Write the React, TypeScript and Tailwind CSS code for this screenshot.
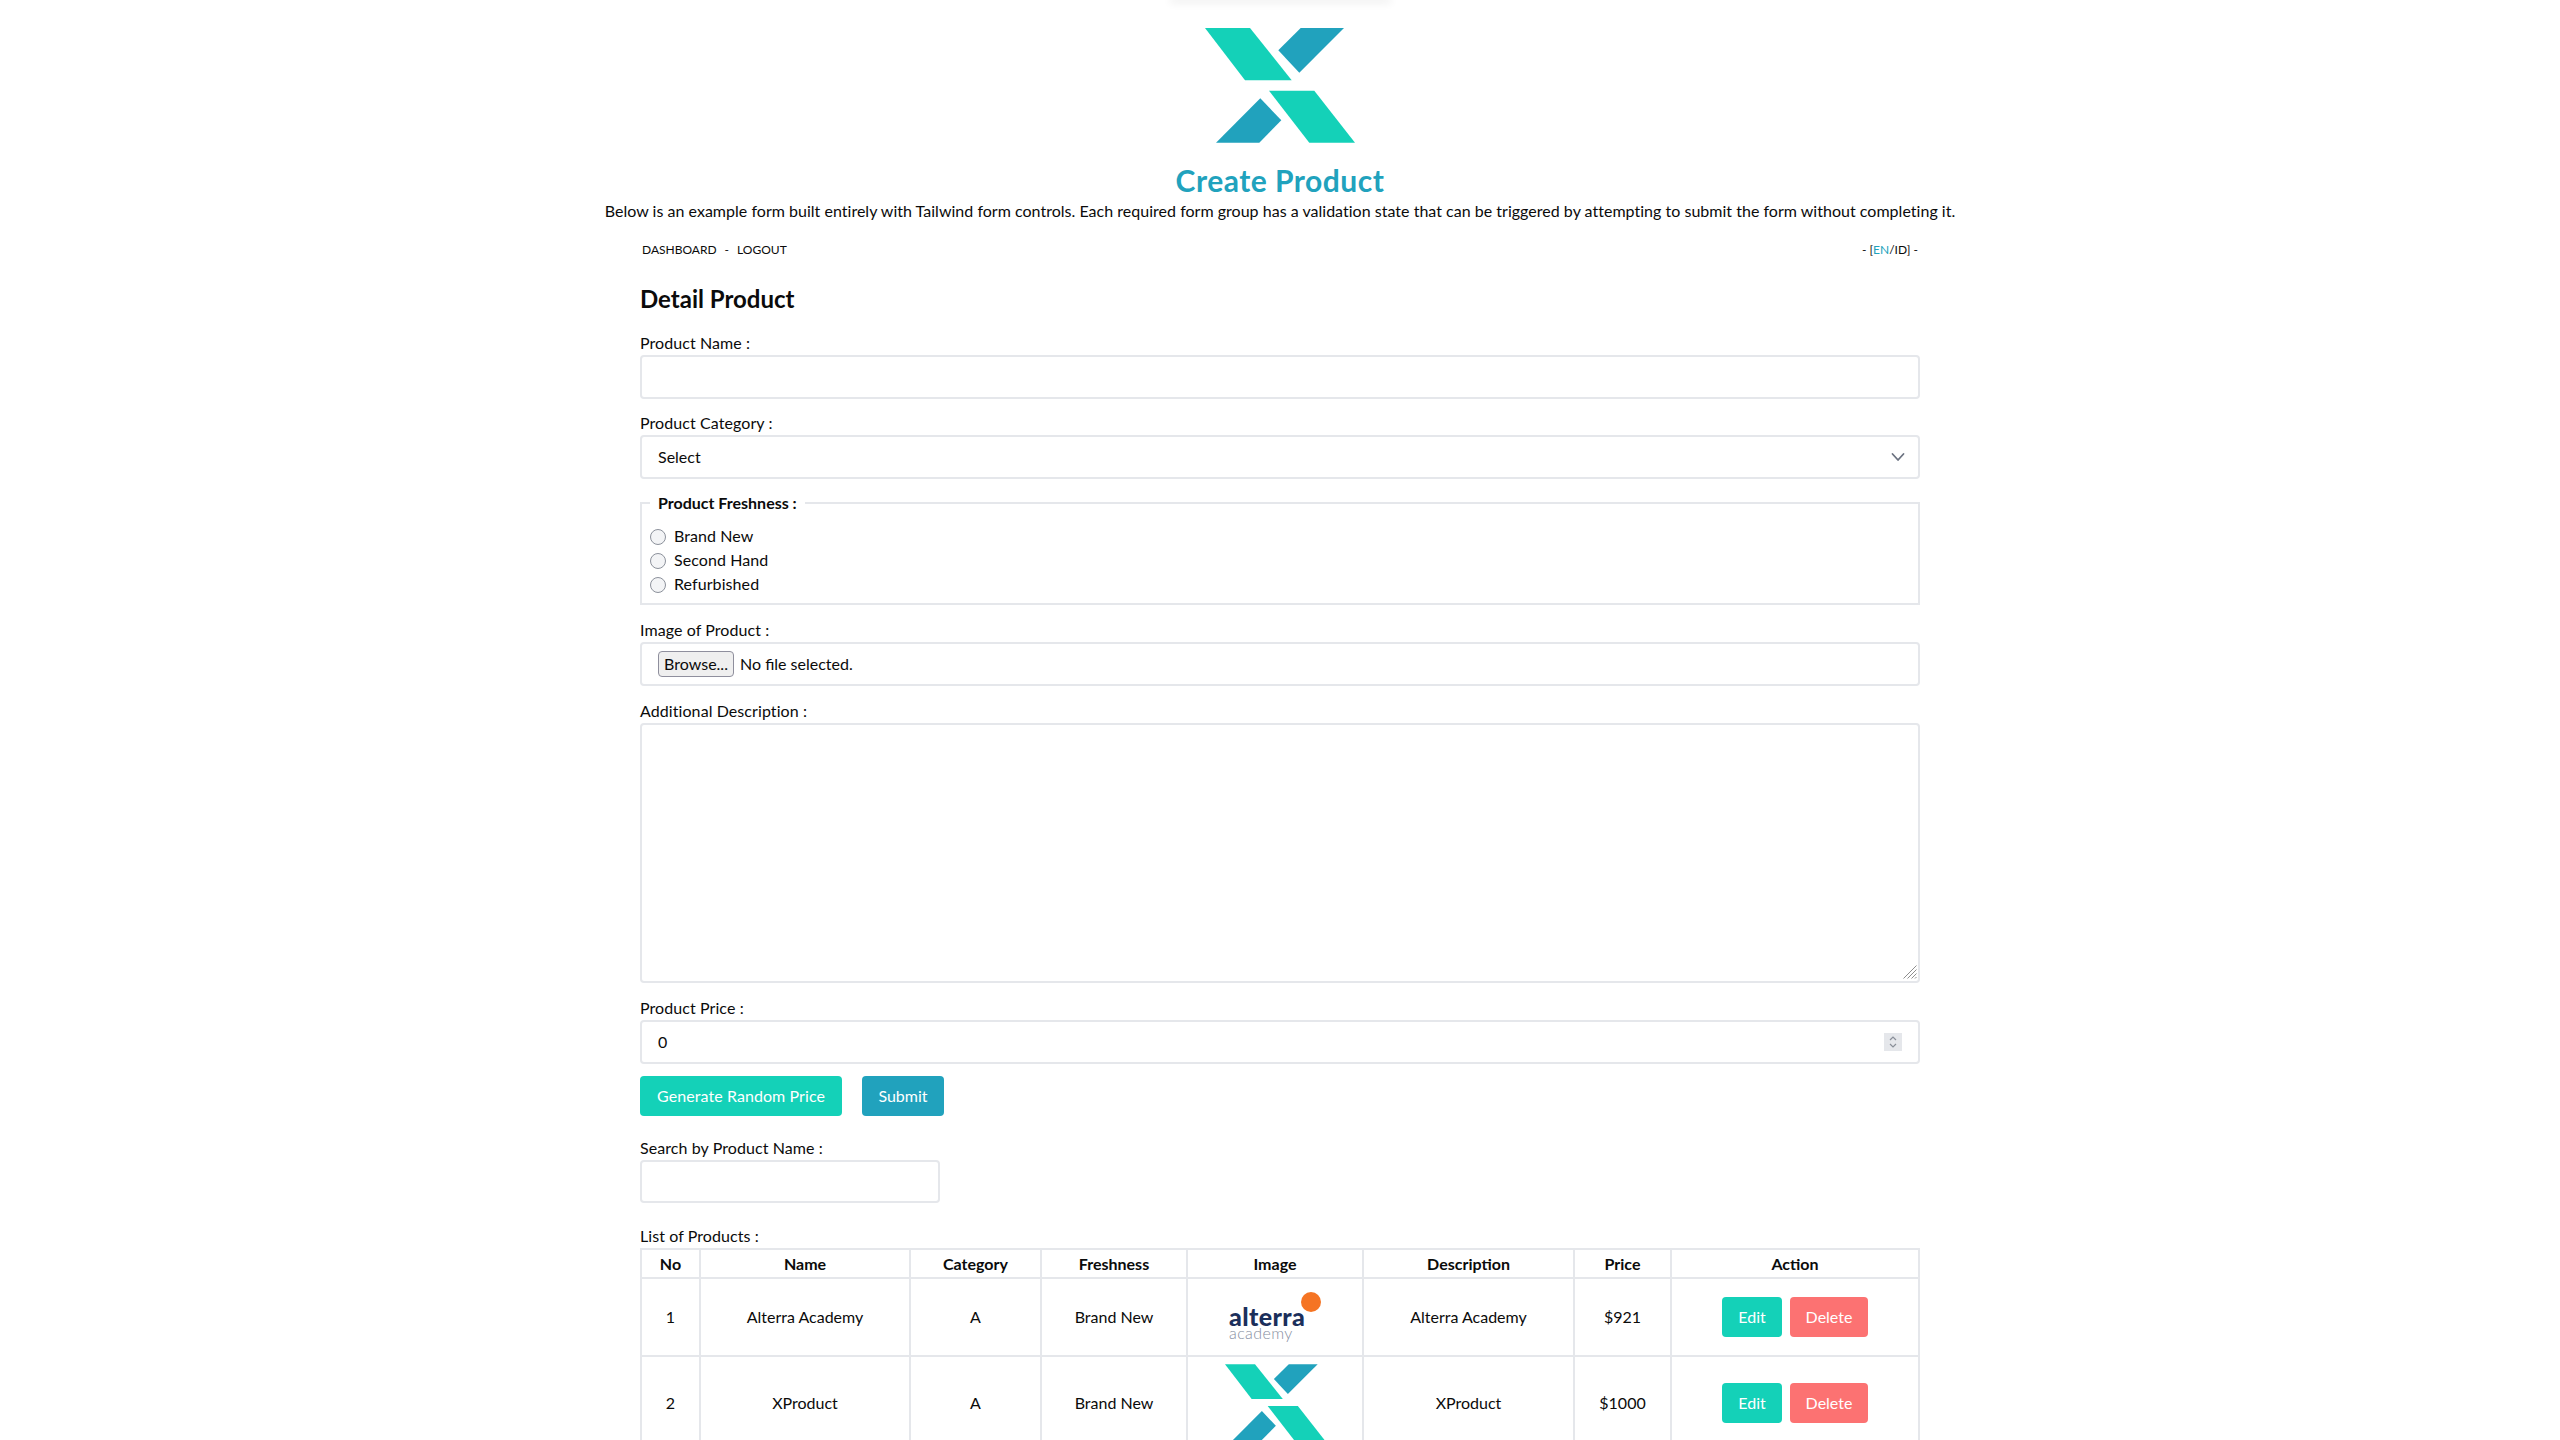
const XLogo = ({ className }: { className: string }) => (
  <svg viewBox="0 0 150 115" className={className}>
    <polygon points="0,0 45,0 86.700,52.300 40,52.300" fill="#14D1B8" />
    <polygon points="95.700,0 139,0 94.300,44.700 73.300,22.300" fill="#21A2BD" />
    <polygon points="64,62.700 109.300,62.700 150,114.700 104.300,114.700" fill="#14D1B8" />
    <polygon points="55.300,70.300 76.300,92.300 54.300,114.700 11,114.700" fill="#21A2BD" />
  </svg>
);

const AlterraLogo = () => (
  <div className="relative w-[92px] h-[50px] mx-auto">
    <div className="absolute right-0 top-0 w-5 h-5 rounded-full bg-[#F57423]" />
    <div className="absolute left-0 top-[14px] text-[#1B2F5B] text-[25px] leading-[20px] font-black tracking-[0.4px]">
      alterra
    </div>
    <div className="absolute left-0 top-[34px] text-[#858DA0] text-[16px] leading-[14px] font-light tracking-[0.4px]">
      academy
    </div>
  </div>
);

function Label({ text }: { text: string }) {
  return <label className="block text-base leading-5 tracking-[0.08px] mb-[2px]">{text}</label>;
}

const boxClass = "w-full border-2 border-[#E5E7EB] rounded bg-white";

const products = [
  { no: 1, name: "Alterra Academy", category: "A", freshness: "Brand New", logo: <AlterraLogo />, price: "$921" },
  { no: 2, name: "XProduct", category: "A", freshness: "Brand New", logo: <XLogo className="w-[100px] h-[77px] mx-auto" />, price: "$1000" },
];

function App() {
  return (
    <div className="font-[Lato,sans-serif] text-[#0b0b0b] bg-white min-h-screen h-[1440px] overflow-hidden">
      <div className="h-0 w-[215px] mx-auto shadow-[0_0_8px_3px_rgba(0,0,0,0.07)]" />

      <div className="pt-7 text-center">
        <XLogo className="w-[150px] h-[115px] mx-auto" />
        <h1 className="mt-[19px] text-[30px] leading-9 font-bold tracking-[0.5px] text-[#21A2BD]">Create Product</h1>
        <p className="mt-[3px] text-base leading-5 tracking-[0.02px]">
          Below is an example form built entirely with Tailwind form controls. Each required form group has a validation
          state that can be triggered by attempting to submit the form without completing it.
        </p>
      </div>

      <div className="w-[1280px] mx-auto">
        <div className="mt-[19px] h-5 flex justify-between items-center text-xs px-[2px]">
          <div className="flex gap-2">
            <span>DASHBOARD</span>
            <span>-</span>
            <span>LOGOUT</span>
          </div>
          <div>
            - [<span className="text-[#21A2BD]">EN</span>/ID] -
          </div>
        </div>

        <h2 className="mt-[23px] text-2xl leading-8 font-bold">Detail Product</h2>

        <form className="mt-[18px]">
          <Label text="Product Name :" />
          <input className={`${boxClass} h-[44px] block`} />

          <div className="mt-[14px]">
            <Label text="Product Category :" />
            <div className="relative">
              <select className={`${boxClass} h-[44px] px-4 appearance-none text-base block`}>
                <option>Select</option>
              </select>
              <svg viewBox="0 0 20 20" className="absolute right-[12px] top-[12px] w-5 h-5" fill="none" stroke="#6B7280" strokeWidth="1.800" strokeLinecap="round" strokeLinejoin="round">
                <path d="M4.500 7l5.500 6 5.500-6" />
              </svg>
            </div>
          </div>

          <fieldset className="mt-[14px] border-2 border-[#E5E7EB] pl-2 h-[112px]">
            <legend className="px-2 font-bold text-base leading-5">Product Freshness :</legend>
            <div className="mt-3">
              {["Brand New", "Second Hand", "Refurbished"].map((item) => (
                <div key={item} className="flex items-center gap-2 h-6">
                  <input type="radio" name="freshness" className="appearance-none w-4 h-4 rounded-full border border-[#8C919B] bg-[#F3F4F6]" />
                  <span className="text-base leading-5 tracking-[0.08px] -mt-[2px]">{item}</span>
                </div>
              ))}
            </div>
          </fieldset>

          <div className="mt-[15px]">
            <Label text="Image of Product :" />
            <div className={`${boxClass} h-[44px] flex items-center gap-[6px] pl-4`}>
              <button type="button" className="w-[76px] h-[26px] bg-[#EFEFEF] border border-[#8F8F9D] rounded text-base leading-5">
                Browse...
              </button>
              <span className="text-base">No file selected.</span>
            </div>
          </div>

          <div className="mt-[15px]">
            <Label text="Additional Description :" />
            <div className="relative">
              <textarea className={`${boxClass} h-[260px] block resize-none`} />
              <svg viewBox="0 0 14 14" className="absolute right-[3px] bottom-[4px] w-[14px] h-[14px]" fill="none" stroke="#8E8E8E" strokeWidth="1">
                <path d="M0.500 13.500L13.500 0.500M4.500 13.500L13.500 4.500M8.500 13.500L13.500 8.500M12 13.500L13.500 12" />
              </svg>
            </div>
          </div>

          <div className="mt-[15px]">
            <Label text="Product Price :" />
            <div className={`${boxClass} h-[44px] flex items-center pl-4 pr-[16px]`}>
              <input defaultValue="0" className="flex-1 text-base outline-none" />
              <div className="w-[18px] h-[18px] bg-[#E5E7EB] flex items-center justify-center">
                <svg viewBox="0 0 18 18" className="w-[18px] h-[18px]" fill="none" stroke="#8A8F99" strokeWidth="1.200">
                  <path d="M6 7l3-3 3 3M6 11l3 3 3-3" />
                </svg>
              </div>
            </div>
          </div>

          <div className="mt-3 flex gap-5">
            <button type="button" className="w-[202px] h-10 rounded bg-[#14D1B8] text-white text-base tracking-[0.08px]">
              Generate Random Price
            </button>
            <button type="button" className="w-[82px] h-10 rounded bg-[#21A2BD] text-white text-base">
              Submit
            </button>
          </div>

          <div className="mt-[22px]">
            <Label text="Search by Product Name :" />
            <input className="w-[300px] h-[43px] block border-2 border-[#E5E7EB] rounded" />
          </div>
        </form>

        <div className="mt-[23px] text-base leading-5 tracking-[0.08px] mb-[2px]">List of Products :</div>
        <table className="w-full table-fixed border-collapse border-2 border-[#E5E7EB] text-base text-center">
          <colgroup>
            <col className="w-[59px]" />
            <col className="w-[210px]" />
            <col className="w-[131px]" />
            <col className="w-[146px]" />
            <col className="w-[176px]" />
            <col className="w-[211px]" />
            <col className="w-[97px]" />
            <col />
          </colgroup>
          <thead>
            <tr className="h-[29px] font-bold">
              {["No", "Name", "Category", "Freshness", "Image", "Description", "Price", "Action"].map((h) => (
                <th key={h} className="border-2 border-[#E5E7EB] font-bold leading-5">
                  {h}
                </th>
              ))}
            </tr>
          </thead>
          <tbody>
            {products.map((p) => (
              <tr key={p.no} className="first:h-[78px] h-[93px]">
                <td className="border-2 border-[#E5E7EB]">{p.no}</td>
                <td className="border-2 border-[#E5E7EB]">{p.name}</td>
                <td className="border-2 border-[#E5E7EB]">{p.category}</td>
                <td className="border-2 border-[#E5E7EB]">{p.freshness}</td>
                <td className="border-2 border-[#E5E7EB]">{p.logo}</td>
                <td className="border-2 border-[#E5E7EB]">{p.name}</td>
                <td className="border-2 border-[#E5E7EB]">{p.price}</td>
                <td className="border-2 border-[#E5E7EB]">
                  <div className="flex justify-center gap-2">
                    <button type="button" className="w-[60px] h-10 rounded bg-[#14D1B8] text-white">Edit</button>
                    <button type="button" className="w-[78px] h-10 rounded bg-[#FC7272] text-white">Delete</button>
                  </div>
                </td>
              </tr>
            ))}
          </tbody>
        </table>
      </div>
    </div>
  );
}

export default App;
